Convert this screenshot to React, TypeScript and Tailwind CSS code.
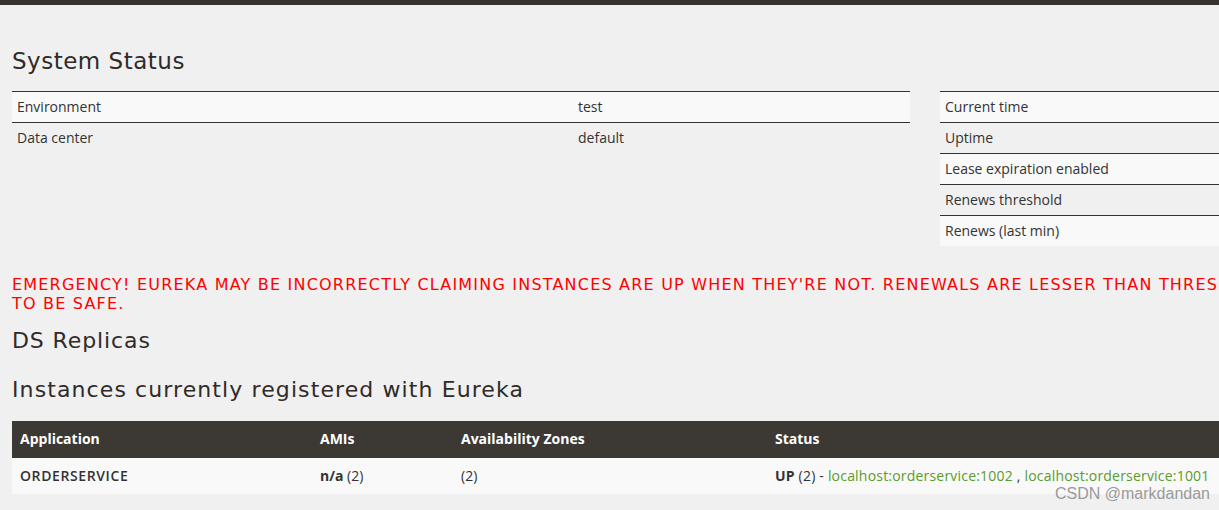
import React from "react"

const body = { fontFamily: '"Open Sans", "Noto Sans", sans-serif' }
const head = { fontFamily: '"DejaVu Sans", "Noto Sans", sans-serif' }

const leftRows = [
  ["Environment", "test"],
  ["Data center", "default"],
]

const rightRows = [
  "Current time",
  "Uptime",
  "Lease expiration enabled",
  "Renews threshold",
  "Renews (last min)",
]

export default function App() {
  return (
    <div
      className="relative h-[510px] w-[1219px] overflow-hidden bg-[#f0f0f0] text-[#333]"
      style={body}
    >
      <div className="h-[5px] bg-[#38332f]" />

      <div className="w-[1900px] px-[12px]">
        <h1
          className="mt-[41px] text-[23px] leading-[30px] tracking-[0.5px] text-[#2f2b28]"
          style={head}
        >
          System Status
        </h1>

        <div className="mt-[15px] flex gap-[30px]">
          <div className="w-[898px] shrink-0">
            {leftRows.map(([k, v], i) => (
              <div
                key={k}
                className={
                  "flex h-[31px] items-center border-t border-[#333] pb-[2px] text-[14px] " +
                  (i % 2 === 0 ? "bg-[#f9f9f9]" : "")
                }
              >
                <div className="w-[561px] pl-[5px]">{k}</div>
                <div className="pl-[5px]">{v}</div>
              </div>
            ))}
          </div>
          <div className="w-[898px] shrink-0">
            {rightRows.map((k, i) => (
              <div
                key={k}
                className={
                  "flex h-[31px] items-center border-t border-[#333] pb-[2px] text-[14px] " +
                  (i % 2 === 0 ? "bg-[#f9f9f9]" : "")
                }
              >
                <div className="pl-[5px]">{k}</div>
              </div>
            ))}
          </div>
        </div>

        <div
          className="mt-[29px] text-[16px] leading-[19px] tracking-[1.2px] text-[#ff0000]"
          style={head}
        >
          <div className="whitespace-nowrap">
            EMERGENCY! EUREKA MAY BE INCORRECTLY CLAIMING INSTANCES ARE UP WHEN
            THEY'RE NOT. RENEWALS ARE LESSER THAN THRESHOLD AND HENCE THE
            INSTANCES ARE NOT BEING EXPIRED JUST
          </div>
          <div>TO BE SAFE.</div>
        </div>

        <h2
          className="mt-[13px] text-[22px] leading-[30px] tracking-[0.9px] text-[#2f2b28]"
          style={head}
        >
          DS Replicas
        </h2>
        <h2
          className="mt-[19px] text-[22px] leading-[30px] tracking-[1.1px] text-[#2f2b28]"
          style={head}
        >
          Instances currently registered with Eureka
        </h2>

        <div className="mt-[16px]">
          <div className="grid h-[37px] grid-cols-[300px_141px_314px_1fr] items-center bg-[#3c3833] pb-[2px] text-[14px] font-bold text-white">
            <div className="pl-[8px]">Application</div>
            <div className="pl-[8px]">AMIs</div>
            <div className="pl-[8px]">Availability Zones</div>
            <div className="pl-[8px]">Status</div>
          </div>
          <div className="grid h-[36px] grid-cols-[300px_141px_314px_1fr] items-center bg-[#f9f9f9] pb-[2px] text-[14px]">
            <div className="pl-[8px] font-semibold tracking-[0.6px]">ORDERSERVICE</div>
            <div className="pl-[8px]">
              <span className="font-bold">n/a</span> (2)
            </div>
            <div className="pl-[8px]">(2)</div>
            <div className="pl-[8px] tracking-[0.2px]">
              <span className="font-bold">UP</span> (2) -{" "}
              <span className="text-[#5a9b2b]">localhost:orderservice:1002</span>{" "}
              ,{" "}
              <span className="text-[#5a9b2b]">localhost:orderservice:1001</span>
            </div>
          </div>
        </div>
      </div>

      <div
        className="absolute top-[483px] left-[1055px] text-[16px] leading-[22px] text-[#9a9a9a]"
        style={{ fontFamily: '"Liberation Sans", Arial, sans-serif' }}
      >
        CSDN @markdandan
      </div>
    </div>
  )
}
